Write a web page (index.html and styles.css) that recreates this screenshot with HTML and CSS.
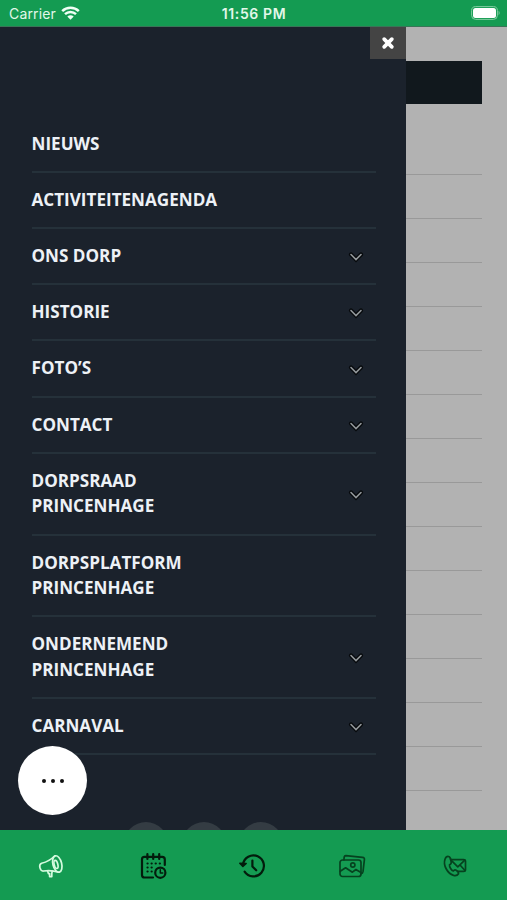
FILE: index.html
```html
<!DOCTYPE html>
<html lang="nl">
<head>
    <meta charset="UTF-8">
    <meta name="viewport" content="width=device-width, initial-scale=1.0">
    <title>Princenhage</title>
    <link rel="stylesheet" href="styles.css">
</head>
<body>
    <div class="app">
        <header class="status-bar">
            <div class="carrier">
                <span>Carrier</span>
                <svg class="wifi" viewBox="0 0 19 14">
                    <path d="M1.2 5.2a12 12 0 0 1 16.6 0" />
                    <path d="M4 8.2a8 8 0 0 1 11 0" />
                    <path class="wifi-dot" d="M6.3 10.6a4.8 4.8 0 0 1 6.4 0L9.5 13.8z" />
                </svg>
            </div>
            <div class="clock">11:56 PM</div>
            <svg class="battery" viewBox="0 0 30 14">
                <rect class="battery-case" x="0.6" y="0.6" width="25.8" height="12.8" rx="4" />
                <rect class="battery-fill" x="2" y="2" width="23" height="10" rx="2.5" />
                <path class="battery-tip" d="M27.6 4.6q2 2.4 0 4.8z" />
            </svg>
        </header>

        <main class="screen">
            <nav class="drawer">
                <button class="close-button" aria-label="Sluiten">
                    <svg viewBox="0 0 14 14"><path d="M3.2 3.2l7.6 7.6M10.8 3.2l-7.6 7.6" /></svg>
                </button>
                <ul class="menu">
                    <li><span>NIEUWS</span></li>
                    <li><span>ACTIVITEITENAGENDA</span></li>
                    <li><span>ONS DORP</span><svg class="chevron" viewBox="0 0 16 12"><path d="M3 3.5l5 5 5-5" /><path d="M3 3.5l5 5 5-5" /></svg></li>
                    <li><span>HISTORIE</span><svg class="chevron" viewBox="0 0 16 12"><path d="M3 3.5l5 5 5-5" /><path d="M3 3.5l5 5 5-5" /></svg></li>
                    <li><span>FOTO’S</span><svg class="chevron" viewBox="0 0 16 12"><path d="M3 3.5l5 5 5-5" /><path d="M3 3.5l5 5 5-5" /></svg></li>
                    <li><span>CONTACT</span><svg class="chevron" viewBox="0 0 16 12"><path d="M3 3.5l5 5 5-5" /><path d="M3 3.5l5 5 5-5" /></svg></li>
                    <li><span>DORPSRAAD<br>PRINCENHAGE</span><svg class="chevron" viewBox="0 0 16 12"><path d="M3 3.5l5 5 5-5" /><path d="M3 3.5l5 5 5-5" /></svg></li>
                    <li><span>DORPSPLATFORM<br>PRINCENHAGE</span></li>
                    <li><span>ONDERNEMEND<br>PRINCENHAGE</span><svg class="chevron" viewBox="0 0 16 12"><path d="M3 3.5l5 5 5-5" /><path d="M3 3.5l5 5 5-5" /></svg></li>
                    <li><span>CARNAVAL</span><svg class="chevron" viewBox="0 0 16 12"><path d="M3 3.5l5 5 5-5" /><path d="M3 3.5l5 5 5-5" /></svg></li>
                </ul>
                <div class="socials"><i></i><i></i><i></i></div>
            </nav>

            <section class="page">
                <div class="page-header"></div>
                <div class="rows">
                    <div class="row"></div>
                    <div class="row"></div>
                    <div class="row"></div>
                    <div class="row"></div>
                    <div class="row"></div>
                    <div class="row"></div>
                    <div class="row"></div>
                    <div class="row"></div>
                    <div class="row"></div>
                    <div class="row"></div>
                    <div class="row"></div>
                    <div class="row"></div>
                    <div class="row"></div>
                    <div class="row"></div>
                    <div class="row"></div>
                </div>
            </section>

            <button class="more-button" aria-label="Meer"><i></i><i></i><i></i></button>
        </main>

        <footer class="tab-bar">
            <svg class="tab active" viewBox="0 0 28 28">
                <ellipse cx="20.3" cy="12" rx="4.4" ry="8.4" transform="rotate(-14 20.3 12)" />
                <ellipse cx="19" cy="12.4" rx="1.8" ry="4.2" transform="rotate(-14 19 12.4)" />
                <path d="M17.6 4Q12.5 9.3 4.6 11.3Q2.1 12.3 2.9 15.6Q3.8 19.3 6.6 19Q14 17.8 21.8 20.2" />
                <path d="M10.6 19l.8 2.6h1.2v3h2.2v-3l.4-2.6" />
            </svg>
            <svg class="tab calendar" viewBox="0 0 28 28">
                <path d="M14 25.5H5.4Q3 25.5 3 23V7.2Q3 4.8 5.4 4.8H23.2Q25.8 4.8 25.8 7.4V13" />
                <path d="M8.4 2v5M14.2 2v5M20.2 2v5" />
                <path class="dates" d="M8.5 11.5h13M8.5 15.5h8M8.5 19.5h5" />
                <circle cx="21.3" cy="20.7" r="5.1" />
                <path class="thin" d="M21.3 17.8v3.2h2.4" />
            </svg>
            <svg class="tab history" viewBox="0 0 28 28">
                <path d="M5 12.5A10.5 10.5 0 1 1 6.6 19.6" />
                <path d="M14.4 8.5v6l3.8 3.8" />
                <path class="solid" d="M1.8 11.2l6.4 .3-3.3 3z" />
            </svg>
            <svg class="tab photos" viewBox="0 0 28 28">
                <rect x="2" y="8" width="21" height="16.5" rx="2.5" />
                <path d="M5.9 7.8L6.2 5Q6.5 3.7 7.8 3.7L24.5 5.3Q26.7 5.6 26.4 7.6L25 19.7Q24.7 21.6 23.1 21.6" />
                <circle cx="14.8" cy="13" r="2.1" />
                <path d="M2.2 19.3l5.4-3.5 6.8 4.4 3.5-2.7 5 3" />
            </svg>
            <svg class="tab contact" viewBox="0 0 28 28">
                <path d="M9.5 7.6H22.5Q24.5 7.6 24.5 9.5V17.5Q24.5 19.4 22.5 19.4H16.5" />
                <path d="M10 8.2l6.8 6.6 7-6.6M19 13l5 5.5" />
                <path d="M8.2 4.7Q5.4 3.7 4 7.2C2 13 6.2 21.5 12.6 23.4Q16 24.2 17.5 21.7Q17.8 19.5 14.7 18Q13.3 17.5 12.3 19C10.5 18.5 8.2 14.8 8.5 12.7Q10.4 12.2 10.2 10.2Q10 6 8.2 4.7z" />
            </svg>
        </footer>
    </div>
</body>
</html>
```

FILE: styles.css
```css
* {
    box-sizing: border-box;
}

body {
    margin: 0;
    font-family: "Open Sans", sans-serif;
}

button {
    border: none;
    padding: 0;
}

.app {
    width: 507px;
    height: 900px;
    display: flex;
    flex-direction: column;
    overflow: hidden;
}

/* status bar */
.status-bar {
    height: 27px;
    flex: none;
    padding: 0 6px 0 9px;
    display: grid;
    grid-template-columns: 1fr auto 1fr;
    align-items: center;
    background-color: #149b52;
    color: #e2f7e9;
    font-family: Inter, sans-serif;
    font-size: 14px;
    border-bottom: 1px solid #397557;
}

.carrier {
    display: flex;
    align-items: center;
    gap: 5px;
    letter-spacing: 0.15px;
}

.wifi {
    width: 19px;
    height: 14px;
    fill: none;
    stroke: #effff5;
    stroke-width: 2.5;
}

.wifi .wifi-dot {
    fill: #effff5;
    stroke: none;
}

.clock {
    font-weight: 600;
    letter-spacing: 0.6px;
    margin-right: 2px;
}

.battery {
    width: 30px;
    height: 14px;
    justify-self: end;
}

.battery-case {
    fill: none;
    stroke: #82cda1;
}

.battery-fill {
    fill: #fff;
}

.battery-tip {
    fill: #82cda1;
}

.screen {
    position: relative;
    flex: 1;
    min-height: 0;
    display: flex;
    overflow: hidden;
    background-color: #b2b2b2;
}

/* menu drawer */
.drawer {
    width: 406px;
    flex: none;
    display: flex;
    flex-direction: column;
    background-color: #1b222c;
}

.close-button {
    width: 36px;
    height: 32px;
    flex: none;
    align-self: flex-end;
    display: flex;
    align-items: center;
    justify-content: center;
    background-color: #444;
}

.close-button svg {
    width: 14px;
    height: 14px;
    margin-right: 1px;
    stroke: #fff;
    stroke-width: 3.8;
    stroke-linecap: round;
}

.menu {
    list-style: none;
    margin: 57.6px 30px 0 31.5px;
    padding: 0;
}

.menu li {
    display: flex;
    align-items: center;
    justify-content: space-between;
    padding: 14px 12px 14.6px 0;
    border-bottom: 2px solid #25313a;
    color: #edf1f6;
    font-size: 17.1px;
    font-weight: 700;
    line-height: 25.6px;
}

.chevron {
    width: 16px;
    height: 12px;
    margin-top: 3px;
    fill: none;
    stroke: #06090c;
    stroke-width: 4.2;
    stroke-linecap: round;
}

.chevron path + path {
    stroke: #92979a;
    stroke-width: 1.6;
}

.socials {
    display: flex;
    gap: 13.5px;
    margin: 67px 0 0 124px;
}

.socials i {
    width: 44px;
    height: 44px;
    flex: none;
    border-radius: 50%;
    background-color: #343c43;
}

/* dimmed page behind the drawer */
.page {
    flex: 1;
    padding: 34px 25px 0 0;
}

.page-header {
    height: 43px;
    background-color: #11181d;
}

.rows {
    padding-top: 27px;
}

.row {
    height: 44px;
    border-bottom: 1px solid #999;
}

.more-button {
    position: absolute;
    left: 18px;
    top: 719px;
    width: 69px;
    height: 69px;
    display: flex;
    align-items: center;
    justify-content: center;
    gap: 5px;
    border-radius: 50%;
    background-color: #fff;
}

.more-button i {
    width: 4px;
    height: 4px;
    border-radius: 50%;
    background-color: #111;
}

/* bottom tabs */
.tab-bar {
    height: 70px;
    flex: none;
    padding: 1px 38px 0 37px;
    display: flex;
    justify-content: space-between;
    align-items: center;
    background-color: #149b52;
}

.tab {
    width: 28px;
    height: 28px;
    fill: none;
    stroke: #06421f;
    stroke-width: 1.7;
    stroke-linecap: round;
    stroke-linejoin: round;
}

.tab.active {
    stroke: #d5fbdf;
}

.calendar,
.history {
    stroke: #031c0c;
    stroke-width: 2.2;
}

.calendar {
    margin-left: 2px;
}

.photos {
    margin-right: 4px;
}

.calendar .dates {
    stroke-width: 2.2;
    stroke-dasharray: 0.1 4;
}

.calendar .thin {
    stroke-width: 1.5;
}

.history .solid {
    fill: #031c0c;
    stroke-width: 1.5;
}
```
